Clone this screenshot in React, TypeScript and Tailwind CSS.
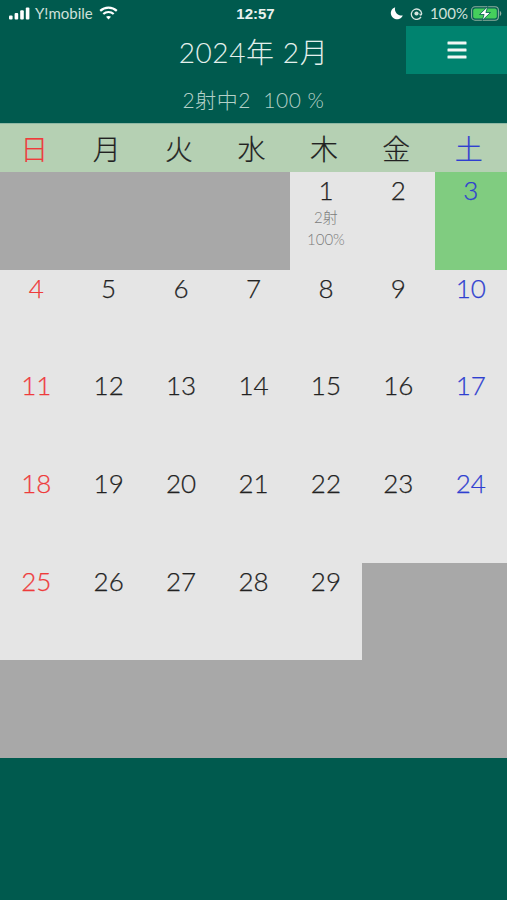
const font = { fontFamily: 'Lato, "Noto Sans CJK JP", sans-serif' }

type Cell = { day?: number; note?: boolean; green?: boolean }

const weekdays = ['日', '月', '火', '水', '木', '金', '土']

const cells: Cell[] = [
  {}, {}, {}, {},
  { day: 1, note: true }, { day: 2 }, { day: 3, green: true },
  ...Array.from({ length: 26 }, (_, i) => ({ day: i + 4 })),
  ...Array.from({ length: 9 }, () => ({})),
]

const dayColor = (col: number) => {
  if (col === 0) return 'text-[#ee3b3b]'
  if (col === 6) return 'text-[#2f3fd0]'
  return 'text-[#222222]'
}

const StatusBar = () => (
  <div className="grid h-[26px] grid-cols-[1fr_auto_1fr] items-center pl-[9px] pr-[5px] text-[15px] text-[#cfe0da]">
    <div className="flex items-center gap-[5px]">
      <svg width="21" height="13" viewBox="0 0 21 13" fill="#fff">
        <rect x="0" y="8.500" width="3.600" height="4" rx="1" />
        <rect x="5.600" y="6" width="3.600" height="6.500" rx="1" />
        <rect x="11.200" y="3.200" width="3.600" height="9.300" rx="1" />
        <rect x="16.800" y="0.500" width="3.600" height="12" rx="1" />
      </svg>
      <span className="leading-none">Y!mobile</span>
      <svg width="19" height="14" viewBox="0 0 19 14" className="ml-[1px]" fill="none" stroke="#fff" strokeWidth="2.200">
        <path d="M1.200 4.900C5.800.6 13.200.6 17.800 4.900" />
        <path d="M4.300 8C7.200 5.300 11.800 5.300 14.700 8" />
        <path d="M9.500 13.600 7 10.700c1.400-1.100 3.600-1.100 5 0z" fill="#fff" stroke="none" />
      </svg>
    </div>
    <span className="text-center font-['Liberation_Sans'] text-[15px] font-bold leading-none text-[#e8f1ee]">12:57</span>
    <div className="flex items-center justify-end gap-[1px]">
      <svg width="14" height="14" viewBox="0 0 14 14" className="mr-[5px]">
        <path d="M5.200 1.200a6.200 6.200 0 1 0 7.600 8.200A6.500 6.500 0 0 1 5.200 1.200z" fill="#fff" />
      </svg>
      <svg width="13" height="13" viewBox="0 0 13 13" fill="none" stroke="#d5e4df" strokeWidth="1.300" className="mr-[6px]">
        <path d="M11 9.900A5.200 5.200 0 1 1 11.700 6.500c0 .8-.3 1.500-.9 1.500-.5 0-.8-.5-.8-1.100V6.500" />
        <circle cx="6.500" cy="6.500" r="2.100" fill="#d5e4df" stroke="none" />
      </svg>
      <span className="mr-[2px] leading-none">100%</span>
      <svg width="31" height="15" viewBox="0 0 31 15">
        <rect x="0.600" y="0.800" width="26.800" height="13.400" rx="3.400" fill="none" stroke="#8fae9f" strokeWidth="1.100" />
        <rect x="2.200" y="2.400" width="23.600" height="10.200" rx="2" fill="#45cf5c" />
        <path d="M28.800 5v5c.9-.3 1.500-1.400 1.500-2.500S29.700 5.300 28.800 5z" fill="#8fae9f" />
        <path d="M16.800 0.500 8.500 8.500h4.600L11.200 14.500 19.500 6.500h-4.600z" fill="#fff" stroke="#005a4e" strokeWidth="0.800" />
      </svg>
    </div>
  </div>
)

const Header = () => (
  <div>
    <div className="grid h-[48px] grid-cols-[101px_1fr_101px] items-center">
      <div />
      <span className="pt-[4px] text-center text-[28px] font-light leading-none tracking-[0.6px] text-[#e4f0ec]">2024年&nbsp;2月</span>
      <button className="flex h-[48px] items-center justify-center bg-[#00836f]">
        <svg width="20" height="18" viewBox="0 0 20 18" fill="#f2f7f5">
          <rect x="0.500" y="0.500" width="19" height="3" rx="0.600" />
          <rect x="0.500" y="7.500" width="19" height="3" rx="0.600" />
          <rect x="0.500" y="14.500" width="19" height="3" rx="0.600" />
        </svg>
      </button>
    </div>
    <div className="flex h-[49px] items-center justify-center pt-[2px]">
      <span className="text-[21px] font-light leading-none tracking-[0.5px] text-[#b4d0c7]">2射中2&nbsp;&nbsp;100 %</span>
    </div>
  </div>
)

const App = () => {
  return (
    <div className="h-[900px] w-[507px] overflow-hidden bg-[#005a4e]" style={font}>
      <StatusBar />
      <Header />
      <div className="grid h-[49px] grid-cols-7 items-center border-t border-[#8fb8a4] bg-[#b5d0b3]">
        {weekdays.map((w, i) => (
          <span key={w} className={`pr-[4px] pt-[2px] text-center text-[28px] font-light leading-none [-webkit-text-stroke:0.2px] ${dayColor(i)}`}>
            {w}
          </span>
        ))}
      </div>
      <div className="grid h-[586px] grid-cols-7 grid-rows-6 bg-[#a8a8a8]">
        {cells.map((c, i) => (
          <div
            key={i}
            className={`flex flex-col items-center pt-[2px] ${
              c.green ? 'bg-[#80cc80]' : c.day ? 'bg-[#e5e5e5]' : 'bg-[#a8a8a8]'
            }`}
          >
            {c.day && <span className={`text-[26px] font-light leading-[32px] [-webkit-text-stroke:0.25px] ${dayColor(i % 7)}`}>{c.day}</span>}
            {c.note && (
              <div className="flex flex-col items-center text-[15px] font-light leading-[22px] text-[#7c7c7c]">
                <span>2射</span>
                <span>100%</span>
              </div>
            )}
          </div>
        ))}
      </div>
    </div>
  )
}

export default App
